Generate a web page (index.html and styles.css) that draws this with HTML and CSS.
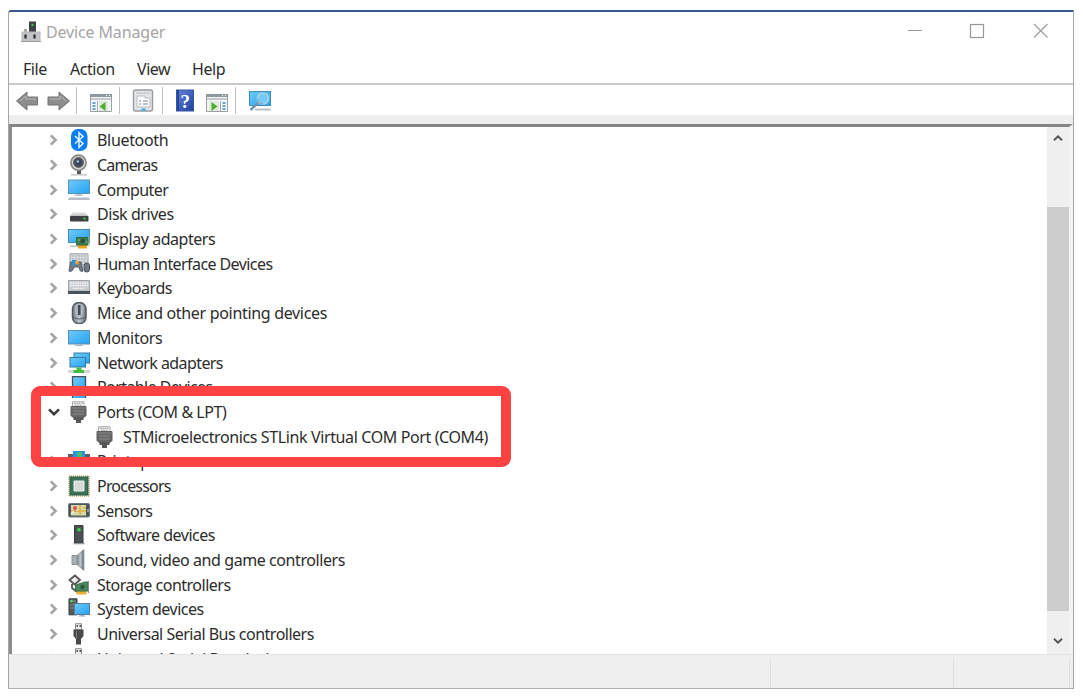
FILE: index.html
```
<!DOCTYPE html>
<html lang="en">
<head>
<meta charset="utf-8">
<title>Device Manager</title>
<link rel="stylesheet" href="styles.css">
</head>
<body>
<svg class="defs" aria-hidden="true">
<defs>
<linearGradient id="blue" x1="0" y1="0" x2="1" y2="1"><stop offset="0" stop-color="#72caf6"/><stop offset="1" stop-color="#22a2f6"/></linearGradient>
<linearGradient id="steel" x1="0" y1="0" x2="1" y2="0"><stop offset="0" stop-color="#737980"/><stop offset=".5" stop-color="#c1c8cf"/><stop offset="1" stop-color="#68717b"/></linearGradient>
<linearGradient id="disk" x1="0" y1="0" x2="0" y2="1"><stop offset="0" stop-color="#f1f1f3"/><stop offset="1" stop-color="#b3b4b7"/></linearGradient>
<linearGradient id="book" x1="0" y1="0" x2="1" y2="1"><stop offset="0" stop-color="#6885df"/><stop offset="1" stop-color="#1d409e"/></linearGradient>
<symbol id="chev" viewBox="0 0 10 12"><path d="M1.8 1.4 6.600 6 1.8 10.6" fill="none" stroke="#a4a4a4" stroke-width="2.6"/></symbol>
<symbol id="open" viewBox="0 0 12 12"><path d="M1 3.3 6 8.2 11 3.3" fill="none" stroke="#3b3b3b" stroke-width="2.5"/></symbol>
<symbol id="bt" viewBox="0 0 22 22"><rect x="3" y="0" width="16.500" height="22" rx="7" fill="#087df5"/><path d="M7 7l8 7.5-4 4V3.7l4 3.8-8 7" fill="none" stroke="#e9f5ff" stroke-width="1.5"/></symbol>
<symbol id="cam" viewBox="0 0 22 22"><path d="M9 16h4v4H9z" fill="#555"/><path d="M3 20.3h16v1.2H3z" fill="#b5b8bc"/><circle cx="10.500" cy="8.7" r="7.600" fill="#d4d4d4" stroke="#8b8987" stroke-width="1.7"/><circle cx="10.500" cy="8.5" r="5" fill="#4b4f57" stroke="#666"/><circle cx="10.500" cy="8.5" r="3" fill="#35455f"/><circle cx="9.8" cy="7.5" r="1.3" fill="#a1bfd8"/></symbol>
<symbol id="pc" viewBox="0 0 22 22"><rect x=".5" y="1" width="21" height="13.500" fill="url(#blue)" stroke="#5b93b5"/><path d="M8 15h6l1 2H6z" fill="#b8cbd7"/><path d="M1 18.500h20l1 2.500H0z" fill="#b3bec8"/></symbol>
<symbol id="drive" viewBox="0 0 22 22"><path d="M5 9h12l3.5 4.5H1.5z" fill="url(#disk)"/><rect x="2" y="13" width="18.5" height="5.500" rx=".7" fill="#3d4145"/><path d="M15.5 15.6h2" stroke="#35d63d" stroke-width="2"/></symbol>
<symbol id="disp" viewBox="0 0 22 22"><rect x=".5" y="1.5" width="21" height="13" fill="url(#blue)" stroke="#4a88af"/><path d="M2 17.500h8V19H2z" fill="#b9c6cc"/><path d="M10 16h9v4.500h-9z" fill="#eda51e"/><path d="M8.500 9.500H20v7.500H8.500z" fill="#408050" stroke="#31673c"/><circle cx="14.8" cy="13.2" r="2.4" fill="#29503d"/><path d="M21 8v10.500M10 12h1.5m6 2h2" stroke="#9db8a2"/></symbol>
<symbol id="hid" viewBox="0 0 22 22"><path d="M2 .8h18v11H2z" fill="#d8dbdd" stroke="#9ba0a5"/><path d="M4 3h14M4 6h14M4 9h14" stroke="#a4a9af" stroke-width="1.2" stroke-dasharray="2 1"/><path d="M2.500 9h10.500l2 9q-3 2-4-4H6q-2 6-5 4z" fill="#737b85" stroke="#555e69"/><path d="M4 7h4v5H4z" fill="#2494e1"/><circle cx="9" cy="9.5" r="2" fill="#efa03f"/><rect x="16" y="10" width="5.5" height="9" rx="2.7" fill="#717a84" stroke="#444d58"/></symbol>
<symbol id="key" viewBox="0 0 22 22"><path d="M.5 3.5h21v10.7H.5z" fill="#c9cdd1" stroke="#9fa5ac"/><path d="M2 6h18M2 8.5h18M5 11.3h12" stroke="#f4f5f6" stroke-width="1.3" stroke-dasharray="1.7 .7"/><path d="M0 14h22v3H0z" fill="#4b5259"/></symbol>
<symbol id="mouse" viewBox="0 0 22 22"><rect x="4.5" y=".7" width="13.5" height="20.8" rx="6" fill="url(#steel)" stroke="#515b65" stroke-width="1.5"/><rect x="7" y="2" width="8.5" height="12" rx="3.5" fill="#aeb7c0"/><path d="M11.2 3v10" stroke="#414b55" stroke-width="2.6"/><path d="M5 15q6 4 12.5 0" fill="none" stroke="#57616c"/></symbol>
<symbol id="mon" viewBox="0 0 22 22"><rect x=".5" y="3.500" width="21" height="13.500" fill="url(#blue)" stroke="#5a91b3"/><path d="M8 17.5h6l1.5 1.5h-9z" fill="#a9b9c4"/></symbol>
<symbol id="net" viewBox="0 0 22 22"><rect x="6" y="1" width="15.5" height="10" fill="url(#blue)" stroke="#327ca9"/><rect x="2" y="5.500" width="15.5" height="9.500" fill="url(#blue)" stroke="#3778a3"/><path d="M0 18h22v2.800H0z" fill="#d2d4d2"/><path d="M8.5 15.5h5V18H16v3H5.500v-3h3z" fill="#45be43"/></symbol>
<symbol id="port" viewBox="0 0 22 22"><path d="M4.5.5h13V24h-13z" fill="url(#blue)" stroke="#45515c" stroke-width="1.3"/></symbol>
<symbol id="serial" viewBox="0 0 22 22"><path d="M4.500.7h11.500v5H4.500z" fill="#f3f3f3" stroke="#aaa"/><path d="M6 2.3h9M7 4.2h7" stroke="#888" stroke-dasharray="1.4 1"/><path d="M3 5.500h15v9L16 16.500H5L3 14.500z" fill="#676767" stroke="#5d5d5d"/><path d="M3 7h15M5 10h11M5 13h11" stroke="#898989"/><path d="M5.500 16.500h10v2.500H13v3H8v-3H5.500z" fill="#575757"/></symbol>
<symbol id="print" viewBox="0 0 22 22"><path d="M0 4h22v12H0z" fill="#56616b"/><path d="M5 1h12v10H5z" fill="#2996dc"/><path d="M9 2h5v6H9z" fill="#49bd72"/><path d="M4 8h14v7H4z" fill="#a9cce1"/></symbol>
<symbol id="cpu" viewBox="0 0 22 22"><rect x="1" y="1" width="20" height="20" fill="none" stroke="#c6a75e" stroke-width="1.5" stroke-dasharray="1 1"/><rect x="2" y="2" width="18" height="18" fill="#3b7259" stroke="#285d49"/><path d="M6 6h10v10H6z" fill="#d8dad8" stroke="#f0f1ee"/></symbol>
<symbol id="sensor" viewBox="0 0 22 22"><rect x=".5" y="3.5" width="21" height="13.500" rx="1.3" fill="#4c565a" stroke="#747d81"/><path d="M3 5h15v10.500H3z" fill="#d2dbac"/><path d="M3 11h15M12 5v10.500M15 8h3" stroke="#ddb23b" stroke-width="1.7"/><path d="M3 14l6-5" stroke="#e9efc7" stroke-width="2"/><circle cx="7" cy="8" r="2" fill="#e65051"/><path d="M7 8v4" stroke="#be4d42"/><path d="M20 9v3" stroke="#ddd"/></symbol>
<symbol id="soft" viewBox="0 0 22 22"><path d="M6.500 1.500h8.500V19H6.500z" fill="#4b5053" stroke="#373a3d"/><path d="M5.500 19h11v1.300h-11z" fill="#969a9d"/><circle cx="11" cy="5.700" r="1.8" fill="#31e23e"/></symbol>
<symbol id="sound" viewBox="0 0 22 22"><path d="M4 6.500h5v9H4z" fill="#a5adb4" stroke="#8b9299"/><path d="M9 6.500 15.500.8v20.400L9 15.500z" fill="url(#steel)" stroke="#969da3"/><path d="M15.800.8v20.400" stroke="#727b84"/></symbol>
<symbol id="storage" viewBox="0 0 22 22"><path d="M1.500 6 7 1.500 12 6 6.500 10.500zM4 10v4l5 4" fill="#eee" stroke="#555" stroke-width="1.8"/><path d="M8.500 15h10v5.500h-10z" fill="#efaf32"/><path d="M7.500 11 17 8h3v9H7.500z" fill="#4b885f" stroke="#34704a"/><circle cx="14.500" cy="13" r="2.2" fill="#2e5541"/><path d="M20.500 7v12" stroke="#839189"/></symbol>
<symbol id="system" viewBox="0 0 22 22"><path d="M1 .8h8v16H1z" fill="#555b5f" stroke="#353b40"/><path d="M2 3h6M2 7h5M2 10h5" stroke="#868e93"/><circle cx="3.5" cy="3" r="1.2" fill="#54e25b"/><rect x="6.500" y="5.500" width="15" height="11" fill="url(#blue)" stroke="#5a7f99"/><path d="M12 17h4l2 1.5h-8z" fill="#9fb8c9"/></symbol>
<symbol id="usb" viewBox="0 0 22 22"><path d="M7.5.7h6v6h-6z" fill="#eee" stroke="#8d8d8d"/><path d="M8.500 3h1.500m1.500 0h1.500" stroke="#555" stroke-width="1.8"/><path d="M5.500 6.500h10V13L13 16v5.500H8V16l-2.500-3z" fill="#4a4a4a"/><path d="M8.500 8v7" stroke="#808080"/></symbol>
</defs>
</svg>

<main class="window">
  <header class="titlebar">
    <svg class="app-icon" viewBox="0 0 20 22"><path d="M8 .5h7v11H8z" fill="#3f4347"/><circle cx="11.5" cy="4" r="1.2" fill="#41bd47"/><path d="M3 8h3v3H3z" fill="#aaa"/><path d="M1 11h18v9.5H1z" fill="#c3c4c6" stroke="#b5b5b5"/><path d="M4.5 13.5v4m9-4v4" stroke="#292b2c" stroke-width="2.2"/><path d="M0 20.5h20" stroke="#9b9b9b"/></svg>
    <h1 class="title">Device Manager</h1>
    <svg class="controls" viewBox="0 0 144 18" fill="none" stroke="#999"><path d="M1 8.5h14"/><rect x="63.5" y="2.5" width="13" height="13" stroke-width="1.2"/><path d="M127 2l13.5 13.5M140.500 2 127 15.500" stroke-width="1.1"/></svg>
  </header>
  <nav class="menubar"><span class="m-file">File</span><span class="m-action">Action</span><span class="m-view">View</span><span>Help</span></nav>
  <div class="toolbar">
    <svg class="tools" viewBox="0 0 270 32">
      <path d="M1.500 16 12 7v5h10.500v8H12v5z" fill="#8d8d8d" stroke="#737373"/><path d="M5 16l6-5v3h10" fill="none" stroke="#b6b6b6"/>
      <path d="M54.500 16 44 7v5H33v8h11v5z" fill="#8d8d8d" stroke="#737373"/><path d="M35 14h10v-3l6 5" fill="none" stroke="#b6b6b6"/>
      <path d="M61.500 2v27M104.500 2v27M147.500 2v27M220.500 2v27" stroke="#c0c0c0"/>
      <path d="M75.500 9.500h21v17h-21z" fill="#f4f5f6" stroke="#9aa0a5"/><path d="M75 9h22v3H75z" fill="#8e989f"/><path d="M76 14h20" stroke="#c2c8cd" stroke-width="2"/><path d="M82.500 16v10" stroke="#a5adb4"/><path d="M77.500 18h3m-3 3h3m-3 3h3" stroke="#3e8ac3" stroke-width="1.5"/><path d="M84 16h9v10h-9z" fill="#dfe9dc"/><path d="m90.500 17-6 4.500 6 4.500z" fill="#4eae32"/><path d="M91 10.500h1m2 0h1" stroke="#fff"/>
      <rect x="118.500" y="5" width="19" height="21" rx="2" fill="#e5e6e7" stroke="#969ca0" stroke-width="1.4"/><path d="M121 8h14M122 11h8v2h5v9h-13z" fill="#fafafa" stroke="#b6babf"/><path d="M124 16h2m2 0h5m-9 3h2m2 0h5" stroke="#758b9a"/><path d="M126.500 24.500h4" stroke="#2aafe2" stroke-width="2"/>
      <rect x="161.500" y="5" width="17" height="21" fill="url(#book)" stroke="#3656a8"/><path d="M163 5v21" stroke="#294790" stroke-width="2"/><text x="165.500" y="23" class="help-mark">?</text>
      <path d="M191.500 9.500h21v17h-21z" fill="#f4f5f6" stroke="#9aa0a5"/><path d="M191 9h22v3h-22z" fill="#8e989f"/><path d="M192 14h20" stroke="#c2c8cd" stroke-width="2"/><path d="M205.500 16v10" stroke="#a5adb4"/><path d="M207.500 18h3m-3 3h3m-3 3h3" stroke="#3e8ac3" stroke-width="1.5"/><path d="M194 16h10v10h-10z" fill="#dfe9dc"/><path d="m196.500 17 6 4.500-6 4.500z" fill="#4eae32"/><path d="M207 10.500h1m2 0h1" stroke="#fff"/>
      <rect x="234.500" y="6.500" width="21" height="14" fill="url(#blue)" stroke="#438db9"/><path d="M240 24.500h16" stroke="#b8c2c8" stroke-width="2"/><path d="m244 17-8.500 8" stroke="#7595aa" stroke-width="2.500"/><circle cx="248" cy="13.500" r="5.500" fill="#75caf5" stroke="#a7d2e8" stroke-width="1.700"/><path d="M242.700 13.500a5.500 5.500 0 0 0 5.300 5.500" fill="none" stroke="#6a9dbc"/>
    </svg>
  </div>
  <section class="content">
    <div class="tree">
      <div class="row"><svg class="arrow"><use href="#chev"/></svg><svg class="icon"><use href="#bt"/></svg><span class="loose">Bluetooth</span></div>
      <div class="row"><svg class="arrow"><use href="#chev"/></svg><svg class="icon"><use href="#cam"/></svg><span class="tighter">Cameras</span></div>
      <div class="row"><svg class="arrow"><use href="#chev"/></svg><svg class="icon"><use href="#pc"/></svg><span class="tight">Computer</span></div>
      <div class="row"><svg class="arrow"><use href="#chev"/></svg><svg class="icon"><use href="#drive"/></svg><span>Disk drives</span></div>
      <div class="row"><svg class="arrow"><use href="#chev"/></svg><svg class="icon"><use href="#disp"/></svg><span>Display adapters</span></div>
      <div class="row"><svg class="arrow"><use href="#chev"/></svg><svg class="icon"><use href="#hid"/></svg><span class="tight">Human Interface Devices</span></div>
      <div class="row"><svg class="arrow"><use href="#chev"/></svg><svg class="icon"><use href="#key"/></svg><span>Keyboards</span></div>
      <div class="row"><svg class="arrow"><use href="#chev"/></svg><svg class="icon"><use href="#mouse"/></svg><span class="loose">Mice and other pointing devices</span></div>
      <div class="row"><svg class="arrow"><use href="#chev"/></svg><svg class="icon"><use href="#mon"/></svg><span class="loose">Monitors</span></div>
      <div class="row"><svg class="arrow"><use href="#chev"/></svg><svg class="icon"><use href="#net"/></svg><span class="tight">Network adapters</span></div>
      <div class="row"><svg class="arrow"><use href="#chev"/></svg><svg class="icon"><use href="#port"/></svg><span class="tight">Portable Devices</span></div>
      <div class="row"><svg class="arrow expanded"><use href="#open"/></svg><svg class="icon"><use href="#serial"/></svg><span>Ports (COM &amp; LPT)</span></div>
      <div class="row child"><svg class="icon"><use href="#serial"/></svg><span class="device">STMicroelectronics STLink Virtual COM Port (COM4)</span></div>
      <div class="row"><svg class="arrow"><use href="#chev"/></svg><svg class="icon"><use href="#print"/></svg><span>Print queues</span></div>
      <div class="row"><svg class="arrow"><use href="#chev"/></svg><svg class="icon"><use href="#cpu"/></svg><span class="tighter">Processors</span></div>
      <div class="row"><svg class="arrow"><use href="#chev"/></svg><svg class="icon"><use href="#sensor"/></svg><span class="tight">Sensors</span></div>
      <div class="row"><svg class="arrow"><use href="#chev"/></svg><svg class="icon"><use href="#soft"/></svg><span class="snug">Software devices</span></div>
      <div class="row"><svg class="arrow"><use href="#chev"/></svg><svg class="icon"><use href="#sound"/></svg><span class="sound-label">Sound, video and game controllers</span></div>
      <div class="row"><svg class="arrow"><use href="#chev"/></svg><svg class="icon"><use href="#storage"/></svg><span class="snug">Storage controllers</span></div>
      <div class="row"><svg class="arrow"><use href="#chev"/></svg><svg class="icon"><use href="#system"/></svg><span class="snug">System devices</span></div>
      <div class="row"><svg class="arrow"><use href="#chev"/></svg><svg class="icon"><use href="#usb"/></svg><span class="snug">Universal Serial Bus controllers</span></div>
      <div class="row"><svg class="arrow"><use href="#chev"/></svg><svg class="icon"><use href="#usb"/></svg><span>Universal Serial Bus devices</span></div>
    </div>
    <div class="scrollbar">
      <svg class="scroll-arrow" viewBox="0 0 10 8"><path d="M1 6.300 5 2.300 9 6.300" fill="none" stroke="#555" stroke-width="2"/></svg>
      <div class="thumb"></div>
      <svg class="scroll-arrow" viewBox="0 0 10 8"><path d="M1 1.700 5 5.700 9 1.700" fill="none" stroke="#555" stroke-width="2"/></svg>
    </div>
  </section>
  <footer class="status"><span class="cell grow"></span><span class="cell middle"></span><span class="cell last"></span></footer>
</main>
<div class="highlight"></div>
</body>
</html>
```
FILE: styles.css
```
* { box-sizing: border-box; }
body { margin: 0; width: 1083px; height: 697px; padding: 10px 9px 8px 8px; overflow: hidden; background: #fff; font-family: "Noto Sans", sans-serif; font-size: 16px; letter-spacing: -0.45px; color: #2c2c2c; }
.defs { position: absolute; width: 0; height: 0; }
.window { width: 1066px; height: 679px; display: flex; flex-direction: column; background: #fff; border: 1px solid #a6a6a6; border-top: 2px solid #36598f; border-bottom: 1px solid #b0b0b0; border-radius: 3px 0 0 0; }
.titlebar { height: 40px; flex: none; display: flex; align-items: center; padding: 0 22px 0 12px; }
.app-icon { width: 20px; height: 22px; margin-bottom: 1px; }
.title { margin: 0 0 0 5px; font-size: 16px; line-height: 22px; font-weight: 400; letter-spacing: -0.15px; color: #a6a6a6; }
.controls { width: 144px; height: 18px; margin: 0 0 2px auto; }
.menubar { height: 31px; flex: none; display: flex; line-height: 35px; padding-left: 14px; }
.m-file { width: 47px; }
.m-action { width: 67px; }
.m-view { width: 55px; }
.toolbar { height: 32px; flex: none; border-top: 2px solid #c9c9cd; padding-left: 6px; overflow: hidden; }
.tools { display: block; width: 270px; height: 32px; }
.help-mark { font: bold 19px "Liberation Serif", serif; fill: #fff; letter-spacing: 0; }
.content { height: 539px; flex: none; display: flex; background: #fff; border-top: 9px solid #eee; }
.tree { flex: 1; height: 530px; overflow: hidden; padding-top: 1px; border-top: 3px solid #858585; border-left: 3px solid #8c8c8c; }
.row { height: 24.7px; display: flex; align-items: center; padding-left: 37px; white-space: nowrap; line-height: 24px; }
.arrow { width: 10px; height: 12px; margin-right: 9px; flex: none; }
.expanded { width: 12px; margin-left: -1px; margin-right: 8px; }
.icon { width: 22px; height: 22px; margin-right: 7px; flex: none; }
.child { padding-left: 82px; }
.tight { letter-spacing: -0.58px; }
.tighter { letter-spacing: -0.8px; }
.snug { letter-spacing: -0.5px; }
.loose { letter-spacing: -0.32px; }
.device { letter-spacing: -0.38px; }
.sound-label { letter-spacing: -0.42px; }
.scrollbar { width: 26px; height: 530px; flex: none; background: #efefef; border-top: 3px solid #858585; border-right: 4px solid #f3f3f3; display: flex; flex-direction: column; align-items: center; }
.scroll-arrow { width: 10px; height: 8px; flex: none; margin-top: 7px; }
.thumb { width: 100%; height: 404px; margin: 65px 0 19px; background: #cdcdcd; flex: none; }
.status { flex: 1; display: flex; background: #efefef; border-top: 1px solid #e4e4e4; padding-top: 4px; }
.cell { border-right: 1px solid #dcdcdc; }
.grow { width: 762px; }
.middle { width: 183px; }
.last { width: 116px; }
.highlight { position: absolute; left: 31px; top: 386px; width: 480px; height: 81px; border: 10px solid #ff4242; border-radius: 9px; }
```
